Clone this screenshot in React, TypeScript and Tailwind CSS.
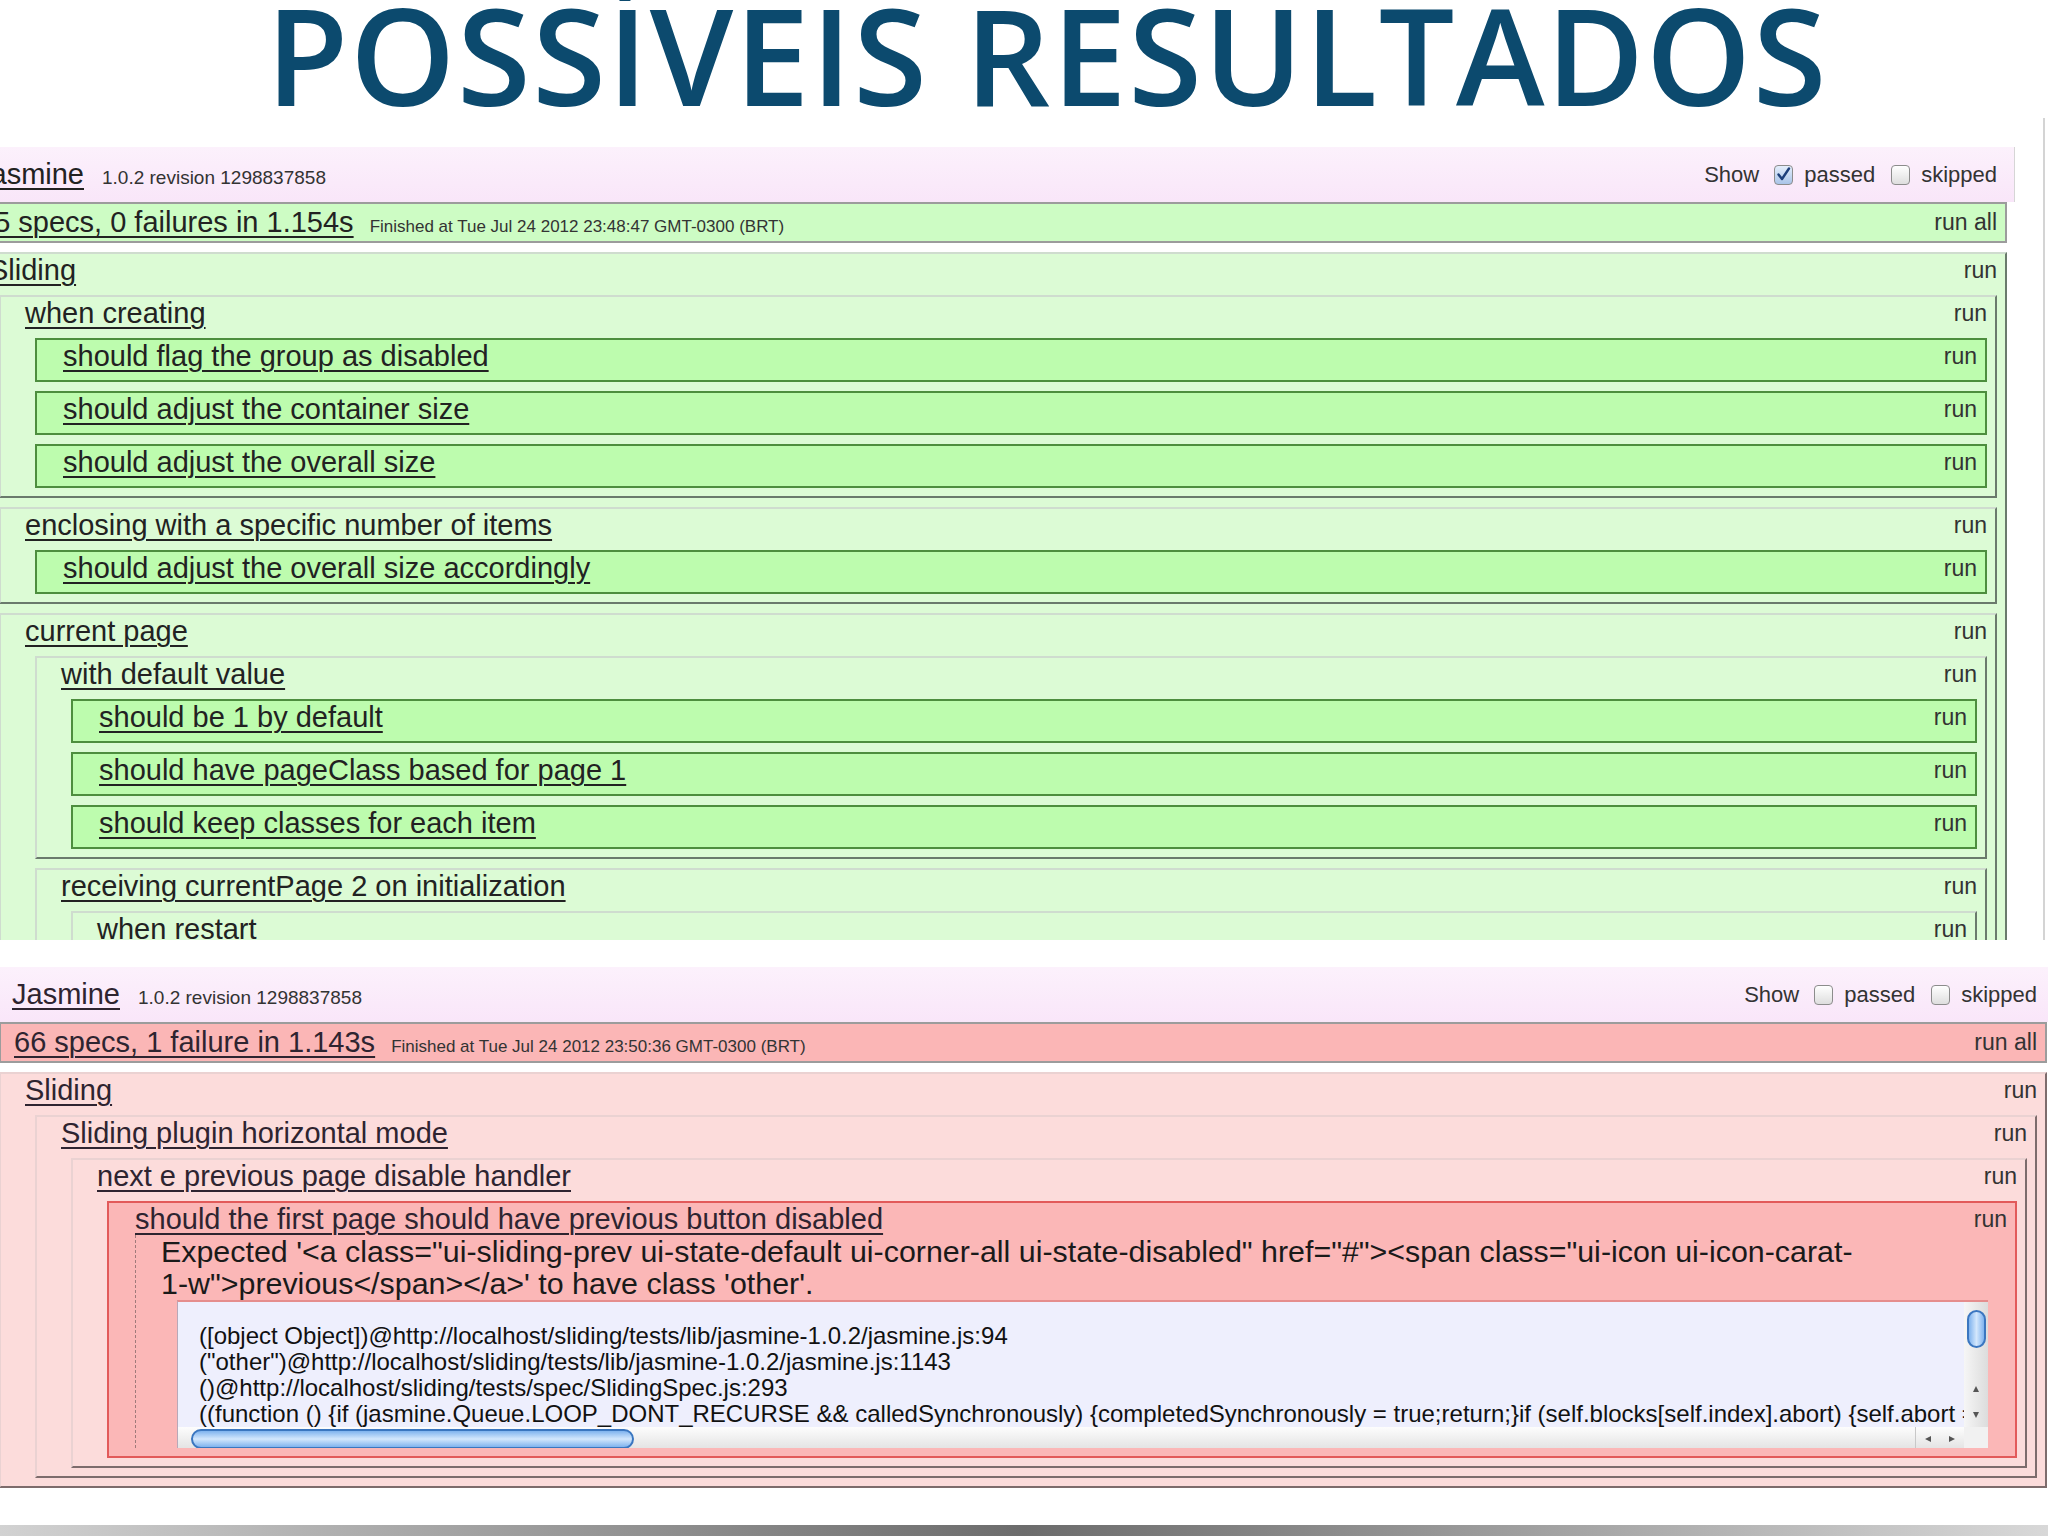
import type { ReactNode } from "react";

type Status = "passed" | "failed";

const traceLines = [
  "([object Object])@http://localhost/sliding/tests/lib/jasmine-1.0.2/jasmine.js:94",
  '("other")@http://localhost/sliding/tests/lib/jasmine-1.0.2/jasmine.js:1143',
  "()@http://localhost/sliding/tests/spec/SlidingSpec.js:293",
  "((function () {if (jasmine.Queue.LOOP_DONT_RECURSE && calledSynchronously) {completedSynchronously = true;return;}if (self.blocks[self.index].abort) {self.abort = true;}self",
];

const messageLines = [
  'Expected \'<a class="ui-sliding-prev ui-state-default ui-corner-all ui-state-disabled" href="#"><span class="ui-icon ui-icon-carat-',
  "1-w\">previous</span></a>' to have class 'other'.",
];

const Link = ({ children, className = "" }: { children: ReactNode; className?: string }) => (
  <span className={`underline decoration-2 underline-offset-[4px] ${className}`}>{children}</span>
);

const Row = ({ title }: { title: string }) => (
  <div className="flex h-[32px] items-center justify-between">
    <Link className="text-[29px] leading-[32px] whitespace-nowrap">{title}</Link>
    <span className="text-[23px] text-[#333]">run</span>
  </div>
);

const Suite = ({ title, status, children }: { title: string; status: Status; children?: ReactNode }) => {
  const colors =
    status === "passed"
      ? "bg-[#dcfbd5] border-t-[#cfdccf] border-l-[#cfdccf] border-r-[#6a7a6c] border-b-[#6a7a6c]"
      : "bg-[#fcdcdb] border-t-[#ead2d2] border-l-[#ead2d2] border-r-[#7d6c6c] border-b-[#7d6c6c]";
  return (
    <div className={`border-2 pb-[8px] pl-[24px] pr-[8px] ${colors}`}>
      <Row title={title} />
      {children && <div className="flex flex-col gap-[9px] pl-[10px] pt-[9px]">{children}</div>}
    </div>
  );
};

const Spec = ({ title }: { title: string }) => (
  <div className="border-2 border-[#4d8e3e] bg-[#bdfcae] pb-[8px] pl-[26px] pr-[8px]">
    <Row title={title} />
  </div>
);

// little scrollbar arrow, drawn rather than typed
const Arrow = ({ dir }: { dir: "up" | "down" | "left" | "right" }) => {
  const points = {
    up: "4,1 7,7 1,7",
    down: "1,1 7,1 4,7",
    left: "7,1 7,7 1,4",
    right: "1,1 7,4 1,7",
  }[dir];
  return (
    <svg width="8" height="8" viewBox="0 0 8 8">
      <polygon points={points} fill="#555" />
    </svg>
  );
};

const Trace = () => (
  <div className="ml-[16px] mt-[1px] grid h-[148px] grid-cols-[1fr_24px] grid-rows-[125px_23px] overflow-hidden border-l border-t-2 border-l-[#b8a8b8] border-t-[#e58d8d] bg-[#eeeffd]">
    <div className="overflow-hidden whitespace-pre pl-[21px] pt-[21px] text-[24px] leading-[26px] text-[#111]">
      {traceLines.map((line) => (
        <div key={line}>{line}</div>
      ))}
    </div>
    <div className="flex flex-col items-center justify-between bg-linear-to-r from-[#f6f6f6] to-[#dcdcdc] pb-[8px] pt-[8px]">
      <div className="h-[38px] w-[19px] rounded-full border-2 border-[#3a76c0] bg-linear-to-r from-[#7fb3ee] via-[#d3e7fc] to-[#7fb3ee]" />
      <div className="flex flex-col items-center gap-[18px]">
        <Arrow dir="up" />
        <Arrow dir="down" />
      </div>
    </div>
    <div className="flex items-center bg-linear-to-b from-[#fdfdfd] to-[#e2e2e2] pl-[13px]">
      <div className="h-[20px] w-[443px] rounded-full border-2 border-[#3a76c0] bg-linear-to-b from-[#7fb3ee] via-[#d3e7fc] to-[#7fb3ee]" />
      <div className="ml-auto flex h-full items-center gap-[16px] border-l border-[#c8c8c8] pl-[8px] pr-[8px]">
        <Arrow dir="left" />
        <Arrow dir="right" />
      </div>
    </div>
    <div className="bg-[#f1f1f1]" />
  </div>
);

const FailedSpec = ({ title }: { title: string }) => (
  <div className="border-2 border-[#e25a5a] bg-[#fbb7b7] pb-[8px] pl-[26px] pr-[8px]">
    <Row title={title} />
    <div className="border-l border-dashed border-[#a07a7a] pl-[25px] pr-[19px]">
      {messageLines.map((line) => (
        <div key={line} className="whitespace-nowrap text-[30.4px] leading-[32px] text-[#1a1a1a]">
          {line}
        </div>
      ))}
      <Trace />
    </div>
  </div>
);

const CheckBox = ({ checked }: { checked?: boolean }) => (
  <span
    className={`inline-flex h-[20px] w-[19px] items-center justify-center rounded-[4px] border border-[#8c8c8c] bg-linear-to-b ${
      checked ? "from-[#e4eefb] to-[#a9c4e8]" : "from-white to-[#dedede]"
    }`}
  >
    {checked && (
      <svg width="15" height="15" viewBox="0 0 15 15">
        <path d="M2.5 7.5 L6 12 L13 1.5" fill="none" stroke="#1d3f7a" strokeWidth="2.4" strokeLinecap="round" strokeLinejoin="round" />
      </svg>
    )}
  </span>
);

const Banner = ({ passedChecked }: { passedChecked?: boolean }) => (
  <div className="-mr-[8px] flex h-[55px] items-center justify-between border-r border-[#d6d6d6] bg-linear-to-b from-[#fcf1fc] to-[#f9e6f9] pl-[13px] pr-[17px]">
    <div className="flex items-baseline whitespace-nowrap">
      <Link className="text-[29px]">Jasmine</Link>
      <span className="ml-[18px] text-[19px] text-[#333]">1.0.2 revision 1298837858</span>
    </div>
    <div className="flex items-center text-[22px] text-[#333]">
      <span>Show</span>
      <span className="ml-[15px] flex">
        <CheckBox checked={passedChecked} />
      </span>
      <span className="ml-[11px]">passed</span>
      <span className="ml-[16px] flex">
        <CheckBox />
      </span>
      <span className="ml-[11px]">skipped</span>
    </div>
  </div>
);

const Runner = ({ status, summary, finished }: { status: Status; summary: string; finished: string }) => (
  <div
    className={`flex h-[41px] items-center justify-between border-2 border-[#9c9c9c] pl-[13px] pr-[8px] ${
      status === "passed" ? "bg-[#cdfcc4]" : "bg-[#fbb6b6]"
    }`}
  >
    <div className="flex items-baseline whitespace-nowrap">
      <Link className="text-[29px] leading-[32px]">{summary}</Link>
      <span className="pl-[16px] text-[17px] text-[#333]">{finished}</span>
    </div>
    <span className="text-[23px] text-[#333]">run all</span>
  </div>
);

const App = () => {
  return (
    <div className="flex h-[1536px] w-[2048px] flex-col overflow-hidden bg-white font-['Liberation_Sans',Arial,sans-serif] text-[#222]">
      <div className="flex h-[108px] justify-center pl-[46px]">
        <h1 className="font-['Open_Sans',sans-serif] text-[134px] font-semibold leading-[108px] tracking-[1.5px] whitespace-nowrap text-[#0c4a6e]">
          POSSÍVEIS RESULTADOS
        </h1>
      </div>

      <div className="mt-[10px] h-[822px] w-[2045px] overflow-hidden border-r-2 border-[#d4d4d4] pt-[29px]">
        <div className="-ml-[37px] w-[2044px]">
          <Banner passedChecked />
          <Runner status="passed" summary="65 specs, 0 failures in 1.154s" finished="Finished at Tue Jul 24 2012 23:48:47 GMT-0300 (BRT)" />
          <div className="mt-[9px]">
            <Suite title="Sliding" status="passed">
              <Suite title="when creating" status="passed">
                <Spec title="should flag the group as disabled" />
                <Spec title="should adjust the container size" />
                <Spec title="should adjust the overall size" />
              </Suite>
              <Suite title="enclosing with a specific number of items" status="passed">
                <Spec title="should adjust the overall size accordingly" />
              </Suite>
              <Suite title="current page" status="passed">
                <Suite title="with default value" status="passed">
                  <Spec title="should be 1 by default" />
                  <Spec title="should have pageClass based for page 1" />
                  <Spec title="should keep classes for each item" />
                </Suite>
                <Suite title="receiving currentPage 2 on initialization" status="passed">
                  <Suite title="when restart" status="passed">
                    <Spec title="should be 1 after restart" />
                  </Suite>
                </Suite>
              </Suite>
            </Suite>
          </div>
        </div>
      </div>

      <div className="mt-[27px] overflow-hidden">
        <div className="-ml-[1px] w-[2048px] text-[#2e2430]">
          <Banner />
          <Runner status="failed" summary="66 specs, 1 failure in 1.143s" finished="Finished at Tue Jul 24 2012 23:50:36 GMT-0300 (BRT)" />
          <div className="mt-[9px]">
            <Suite title="Sliding" status="failed">
              <Suite title="Sliding plugin horizontal mode" status="failed">
                <Suite title="next e previous page disable handler" status="failed">
                  <FailedSpec title="should the first page should have previous button disabled" />
                </Suite>
              </Suite>
            </Suite>
          </div>
        </div>
      </div>

      <div className="mt-auto h-[11px] bg-linear-to-r from-[#d2d2d2] via-[#6c6c6c] to-[#d8d8d8]" />
    </div>
  );
};

export default App;
